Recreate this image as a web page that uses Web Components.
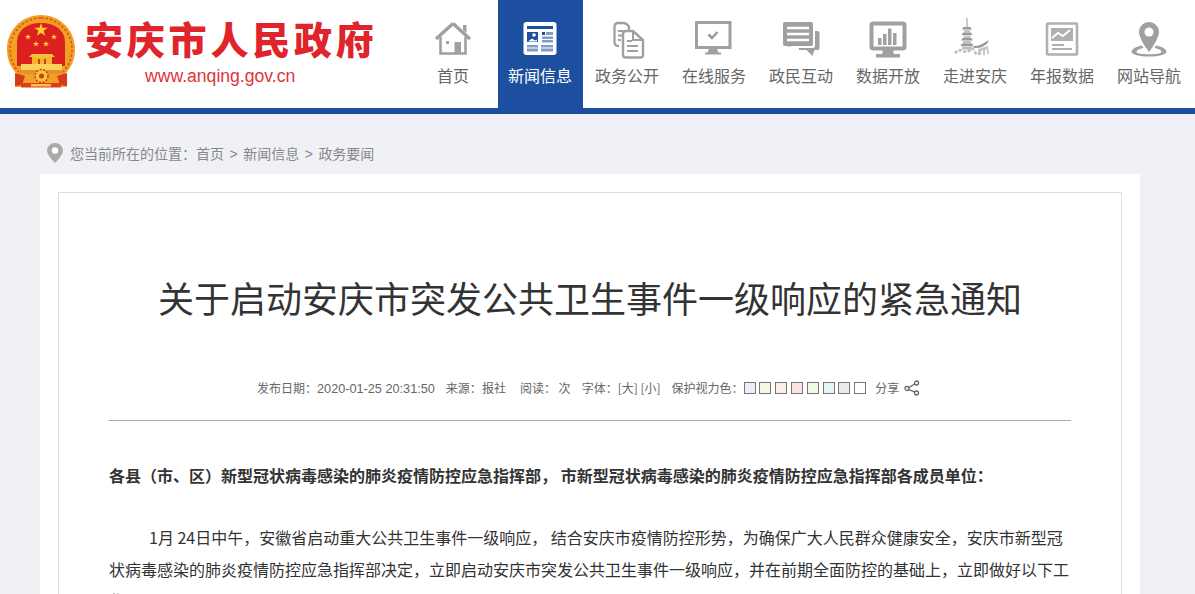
<!DOCTYPE html>
<html lang="zh-CN">
<head>
<meta charset="utf-8">
<title>关于启动安庆市突发公共卫生事件一级响应的紧急通知</title>
<style>
	html { overflow: hidden; }
	body { margin: 0; background: #eff1f5; color: #333; font-family: "Noto Sans CJK SC", sans-serif; }
	.co { font-family: "Noto Sans CJK TC", sans-serif; }
</style>
</head>
<body>
<gov-header>
	<gov-logo slot="logo"></gov-logo>
	<nav-item icon="home">首页</nav-item>
	<nav-item icon="news" active>新闻信息</nav-item>
	<nav-item icon="docs">政务公开</nav-item>
	<nav-item icon="screen">在线服务</nav-item>
	<nav-item icon="chat">政民互动</nav-item>
	<nav-item icon="chart">数据开放</nav-item>
	<nav-item icon="tower">走进安庆</nav-item>
	<nav-item icon="report">年报数据</nav-item>
	<nav-item icon="pin">网站导航</nav-item>
</gov-header>
<bread-crumb></bread-crumb>
<article-panel>
	<span slot="title">关于启动安庆市突发公共卫生事件一级响应的紧急通知</span>
	<meta-bar slot="meta"></meta-bar>
	<p class="lead">各县（市、区）新型冠状病毒感染的肺炎疫情防控应急指挥部， 市新型冠状病毒感染的肺炎疫情防控应急指挥部各成员单位<span class="co">：</span></p>
	<p class="body">1月 24日中午，安徽省启动重大公共卫生事件一级响应， 结合安庆市疫情防控形势，为确保广大人民群众健康安全，安庆市新型冠状病毒感染的肺炎疫情防控应急指挥部决定，立即启动安庆市突发公共卫生事件一级响应，并在前期全面防控的基础上，立即做好以下工作<span class="co">：</span></p>
</article-panel>

<script>
const ICONS = {
	home: `<path d="M24 7.500 7 23" fill="none" stroke="#a0a0a0" stroke-width="3.400"/><path d="M24 7.500 41 23" fill="none" stroke="#a0a0a0" stroke-width="3.400"/><path d="M34 9h3.500v8L34 14z" fill="#a0a0a0"/><path d="M11.500 21v16.500h25V21" fill="none" stroke="#a0a0a0" stroke-width="2.600"/><rect x="25.500" y="26" width="6.500" height="11.500" fill="#a0a0a0"/><rect x="17" y="25" width="3" height="3" fill="#a0a0a0"/>`,
	news: `<rect x="7.500" y="6" width="33" height="33" rx="3" fill="#fff"/><rect x="11" y="10" width="26" height="3" fill="#1d4fa0"/><rect x="11" y="16" width="11" height="10" fill="#1d4fa0"/><circle cx="18" cy="19" r="1.800" fill="#fff"/><path d="M12 25.500l4-3 3 2 2-1v2z" fill="#fff"/><rect x="26" y="16" width="3" height="3" fill="#1d4fa0"/><rect x="30" y="16" width="7" height="3" fill="#7f9ccb"/><rect x="26" y="20.500" width="11" height="2.500" fill="#7f9ccb"/><rect x="26" y="24" width="11" height="2.500" fill="#7f9ccb"/><rect x="11" y="29" width="11" height="2.500" fill="#7f9ccb"/><rect x="11" y="32.500" width="11" height="3" fill="#7f9ccb"/><rect x="25" y="29" width="12" height="2.500" fill="#7f9ccb"/><rect x="25" y="32.500" width="12" height="3" fill="#7f9ccb"/>`,
	docs: `<path d="M16 30h-.500q-4 0-4-4V11q0-4 4-4H20q4 0 6 4v3" fill="none" stroke="#a0a0a0" stroke-width="2.300"/><path d="M15 15h5M15 19.500h5M15 24h3" stroke="#a0a0a0" stroke-width="2"/><path d="M23 15h7l10 9v15q0 2.500-3 2.500H23q-3 0-3-2.500V18q0-3 3-3z" fill="#fff" stroke="#a0a0a0" stroke-width="2.400"/><path d="M30 15.500V24h10" fill="none" stroke="#a0a0a0" stroke-width="2"/><path d="M24 25h5M24 30h11M24 35h11" stroke="#a0a0a0" stroke-width="2.200"/>`,
	screen: `<path d="M6.500 6.500h33.500v25H6.500z" fill="none" stroke="#a0a0a0" stroke-width="3"/><path d="M19 33h8l2 4.500H17z" fill="#a0a0a0"/><rect x="15" y="36.500" width="16" height="2" fill="#a0a0a0"/><path d="M18.500 18.500l3.500 3.500 5.500-6" fill="none" stroke="#999" stroke-width="2.500"/>`,
	chat: `<path d="M8 6h26q2 0 2 2v20q0 2-2 2H18l-7 .5L9 30q-3 0-3-2V8q0-2 2-2z" fill="#a0a0a0"/><path d="M10 12h22M10 18h22M10 24h22" stroke="#fff" stroke-width="2.400"/><path d="M38 15h2.500q2 0 2 2v15q0 2-2 2h-3l-2 6-6-6H22v-2h14q2 0 2-2z" fill="#a0a0a0"/>`,
	chart: `<rect x="7.500" y="7.500" width="33" height="25" rx="2" fill="none" stroke="#a0a0a0" stroke-width="4"/><path d="M19 33h10l1 6H18z" fill="#a0a0a0"/><rect x="12" y="38" width="24" height="3.500" fill="#a0a0a0"/><rect x="14" y="22" width="3.500" height="7" fill="#a0a0a0"/><rect x="19" y="18" width="3.500" height="11" fill="#a0a0a0"/><rect x="24" y="12.500" width="3.500" height="16.500" fill="#a0a0a0"/><rect x="29" y="17" width="3.500" height="12" fill="#a0a0a0"/>`,
	tower: `<g style="filter:blur(.45px)"><path d="M15.500 2h1v9h-1z" fill="#999"/><path d="M12.500 11h7l1.500 2.500H11z" fill="#999"/><path d="M13 14h6v2.500h-6z" fill="#c4c4c4"/><path d="M12 16.500h8l1.500 2.500h-11z" fill="#999"/><path d="M12.500 19.500h7v2.500h-7z" fill="#c4c4c4"/><path d="M11.500 22h9l1.500 2.500H10z" fill="#999"/><path d="M12 25h8v2.500h-8z" fill="#c4c4c4"/><path d="M11 27.500h10l1.500 2.500h-13z" fill="#999"/><path d="M11 30.500h10v3H11z" fill="#bbb"/><path d="M4 37q4-4 8-2t7-1 5 2 6-1" fill="none" stroke="#bbb" stroke-width="2.500" stroke-dasharray="3 1.500"/><path d="M22 30q4 .5 8-1.500t8-4.500q-1 3-3 4.500l-3 2q-4 2-9 1.500z" fill="#999"/><path d="M27 33l10-3 1 8h-2v-5l-2 1v5h-2v-5l-2 1v4h-2z" fill="#c4c4c4"/></g>`,
	report: `<rect x="9" y="7.500" width="30" height="31" rx="1" fill="none" stroke="#b0b0b0" stroke-width="2.600"/><rect x="13" y="12" width="22" height="13" fill="#b0b0b0"/><path d="M14 22l6-5 5 3 7-6" fill="none" stroke="#fff" stroke-width="2"/><path d="M14 29h12M14 33h20" stroke="#b0b0b0" stroke-width="1.800"/>`,
	pin: `<path d="M24 6c-5.500 0-10 4.500-10 10 0 7 10 20 10 20s10-13 10-20c0-5.500-4.500-10-10-10z" fill="#a0a0a0"/><circle cx="24" cy="16" r="4.500" fill="#fff"/><path d="M17 29.500c-6 1-10.500 3.500-10.500 6.500 0 2.500 8 4.500 17.500 4.500s17.500-2 17.500-4.500c0-3-4.500-5.500-10.500-6.500l-1.500 2.500c3.500.8 7 2 7 4 0 1.300-5.500 2.300-12.500 2.300S11.500 37.300 11.500 36c0-2 3.500-3.200 7-4z" fill="#a0a0a0"/>`,
};

class GovHeader extends HTMLElement {
	constructor() {
		super();
		this.attachShadow({ mode: "open" });
		this.shadowRoot.innerHTML = `
			<style>
				:host { display: flex; justify-content: space-between; height: 108px; background: #fff; border-bottom: 6px solid #1d4fa0; }
				nav { display: flex; gap: 2px; margin-right: 3px; }
			</style>
			<slot name="logo"></slot>
			<nav><slot></slot></nav>
		`;
	}
}

class GovLogo extends HTMLElement {
	constructor() {
		super();
		this.attachShadow({ mode: "open" });
		const star = (x, y, r) => {
			let pts = [];
			for (let i = 0; i < 10; i++) {
				const rad = i % 2 ? r * 0.382 : r;
				const a = -Math.PI / 2 + (i * Math.PI) / 5;
				pts.push((x + rad * Math.cos(a)).toFixed(2) + "," + (y + rad * Math.sin(a)).toFixed(2));
			}
			return `<polygon points="${pts.join(" ")}" fill="#ffd22e"/>`;
		};
		this.shadowRoot.innerHTML = `
			<style>
				:host { display: flex; align-items: flex-start; padding: 15px 0 0 7px; }
				.words { display: flex; flex-direction: column; align-items: flex-start; margin: -3px 0 0 10px; }
				h1 { margin: 0; color: #e0242b; font-size: 38px; line-height: 52px; font-weight: 900; letter-spacing: 3.800px; white-space: nowrap; }
				a { color: #e0333a; font: 17.600px/22px "Liberation Sans", sans-serif; margin: 1px 0 0 60px; }
				svg { display: block; }
			</style>
			<svg width="68" height="73" viewBox="0 0 68 73">
				<path d="M34 0C15 0 0 15 0 34c0 11 4 19 10 25l-2 13h52l-2-13c6-6 10-14 10-25C68 15 53 0 34 0z" fill="#f2a024"/>
				<path d="M34 3C17 3 3 17 3 34c0 9 3 17 9 23" fill="none" stroke="#d9541c" stroke-width="1.600" stroke-dasharray="2.500 2"/>
				<path d="M34 3c17 0 31 14 31 31 0 9-3 17-9 23" fill="none" stroke="#d9541c" stroke-width="1.600" stroke-dasharray="2.500 2"/>
				<path d="M10 51V28C10 15 20 8 34 8s24 7 24 20v23z" fill="#dc1f1f"/>
				${star(34, 15, 7)}${star(21, 22, 3.200)}${star(47, 22, 3.200)}${star(29, 29, 3.200)}${star(39, 29, 3.200)}
				<path d="M25 39h20l3 3H22z" fill="#f8c23a"/>
				<rect x="25" y="42" width="20" height="7" fill="#f6b52e"/>
				<path d="M31 44h2v5h-2zM37 44h2v5h-2z" fill="#c9401a"/>
				<rect x="14" y="49" width="41" height="6" fill="#fbd25a"/>
				<path d="M14 55h41l3 4H11z" fill="#e8902a"/>
				<circle cx="34.500" cy="61" r="6.500" fill="#f8c23a" stroke="#c9401a" stroke-width="1.500" stroke-dasharray="2 1.500"/>
				<circle cx="34.500" cy="61" r="2.500" fill="#c9401a"/>
				<path d="M8 58l10 3-3 9-7 1zM60 58l-10 3 3 9 7 1z" fill="#d43a1c"/>
				<rect x="14" y="68" width="40" height="4.500" fill="#de3b20"/>
				<rect x="24" y="69" width="20" height="2.500" fill="#f8c23a"/>
			</svg>
			<div class="words">
				<h1>安庆市人民政府</h1>
				<a>www.anqing.gov.cn</a>
			</div>
		`;
	}
}

class NavItem extends HTMLElement {
	constructor() {
		super();
		this.attachShadow({ mode: "open" });
	}

	connectedCallback() {
		this.shadowRoot.innerHTML = `
			<style>
				:host { display: flex; flex-direction: column; align-items: center; width: 85px; height: 108px; box-sizing: border-box; padding: 16px 1px 0 0; color: #666; font-size: 16px; line-height: 24px; white-space: nowrap; }
				:host([active]) { background: #1d4fa0; color: #fff; }
				svg { display: block; margin-bottom: 3px; }
			</style>
			<svg width="48" height="44" viewBox="0 0 48 44" overflow="visible">${ICONS[this.getAttribute("icon")] || ""}</svg>
			<slot></slot>
		`;
	}
}

class BreadCrumb extends HTMLElement {
	constructor() {
		super();
		this.attachShadow({ mode: "open" });
		this.shadowRoot.innerHTML = `
			<style>
				:host { display: flex; align-items: center; gap: 7px; box-sizing: border-box; height: 60px; padding: 18px 0 0 47px; color: #888; font-size: 14px; }
				svg { display: block; }
				i { font-style: normal; font-family: "Liberation Sans", sans-serif; margin: 0 5.500px; }
				.co { font-family: "Noto Sans CJK TC", sans-serif; }
			</style>
			<svg width="16" height="20" viewBox="0 0 16 20"><path d="M8 0C3.500 0 0 3.400 0 7.800 0 12 8 20 8 20s8-8 8-12.200C16 3.400 12.500 0 8 0z" fill="#aaa"/><circle cx="8" cy="7.500" r="3.200" fill="#fff"/></svg>
			<span>您当前所在的位置<span class="co">：</span>首页<i>&gt;</i>新闻信息<i>&gt;</i>政务要闻</span>
		`;
	}
}

class MetaBar extends HTMLElement {
	constructor() {
		super();
		this.attachShadow({ mode: "open" });
		const tints = ["#eceef8", "#f7f5e4", "#fbf0e4", "#fbe4e2", "#effae2", "#e2f7f2", "#ebebed", "#fff"];
		this.shadowRoot.innerHTML = `
			<style>
				:host { display: flex; align-items: center; height: 20px; padding-left: 148px; color: #666; font-size: 12px; line-height: 20px; white-space: nowrap; }
				.num { font: 12.700px/20px "Liberation Sans", sans-serif; }
				.co { font-family: "Noto Sans CJK TC", sans-serif; }
				.sw { display: flex; gap: 3.800px; margin-right: 9px; }
				.sw b { display: block; width: 10px; height: 10px; border: 1px solid #777; }
				svg { display: block; margin-left: 5px; }
			</style>
			<span style="margin-right:11px">发布日期<span class="co">：</span><span class="num">2020-01-25 20:31:50</span></span>
			<span style="margin-right:14px">来源<span class="co">：</span>报社</span>
			<span style="margin-right:11px">阅读<span class="co">：</span> 次</span>
			<span style="margin-right:11px">字体<span class="co">：</span>[大] [小]</span>
			<span>保护视力色<span class="co">：</span></span>
			<div class="sw">${tints.map((c) => `<b style="background:${c}"></b>`).join("")}</div>
			<span>分享</span>
			<svg width="16" height="16" viewBox="0 0 16 16" fill="none" stroke="#666" stroke-width="1.300"><circle cx="12.500" cy="3" r="2"/><circle cx="3" cy="8.500" r="2"/><circle cx="12.500" cy="13" r="2"/><path d="M10.800 4 4.800 7.500M4.800 9.500l6 2.600"/></svg>
		`;
	}
}

class ArticlePanel extends HTMLElement {
	constructor() {
		super();
		this.attachShadow({ mode: "open" });
		this.shadowRoot.innerHTML = `
			<style>
				:host { display: block; width: 1064px; margin-left: 40px; padding: 18px; background: #fff; }
				.frame { border: 1px solid #ddd; padding: 0 50px; height: 500px; }
				h2 { margin: 0; padding-top: 76px; text-align: center; color: #333; font-size: 36px; line-height: 56px; font-weight: 400; }
				.meta { margin-top: 53px; padding-bottom: 22px; border-bottom: 1px solid #aaa; }
				::slotted(p) { margin: 0; font-size: 16px; color: #333; }
				::slotted(.lead) { margin-top: 40px; line-height: 28px; font-weight: 700; }
				::slotted(.body) { margin-top: 33px; line-height: 31.500px; text-indent: 40px; }
			</style>
			<div class="frame">
				<h2><slot name="title"></slot></h2>
				<div class="meta"><slot name="meta"></slot></div>
				<slot></slot>
			</div>
		`;
	}
}

customElements.define("gov-header", GovHeader);
customElements.define("gov-logo", GovLogo);
customElements.define("nav-item", NavItem);
customElements.define("bread-crumb", BreadCrumb);
customElements.define("meta-bar", MetaBar);
customElements.define("article-panel", ArticlePanel);
</script>
</body>
</html>
